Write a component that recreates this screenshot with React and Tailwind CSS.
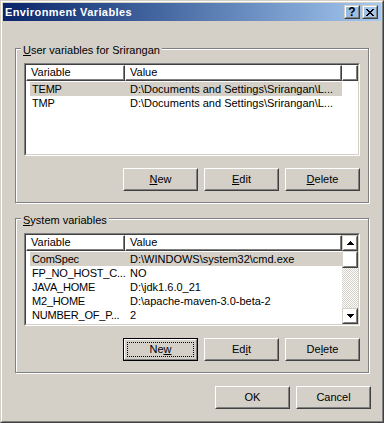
import React from "react";

function Btn({ children, def = false }) {
  if (def)
    return (
      <div className="w-[75px] h-[23px] border border-black">
        <div className="w-full h-full border border-t-white border-l-white border-r-[#808080] border-b-[#808080] p-[2px]">
          <div className="w-full h-full border border-dotted border-black flex items-center justify-center">
            {children}
          </div>
        </div>
      </div>
    );
  return (
    <div className="w-[75px] h-[23px] border border-t-white border-l-white border-r-[#404040] border-b-[#404040]">
      <div className="w-full h-full border border-t-[#d4d0c8] border-l-[#d4d0c8] border-r-[#808080] border-b-[#808080] flex items-center justify-center">
        {children}
      </div>
    </div>
  );
}

function U({ children }) {
  return <span className="underline underline-offset-[1px]">{children}</span>;
}

function HeadCell({ w, children }) {
  return (
    <div className={`${w} h-full border border-t-white border-l-white border-r-[#404040] border-b-[#404040]`}>
      <div className="h-full border-r border-b border-[#808080] pl-[4px] flex items-center whitespace-nowrap">
        {children}
      </div>
    </div>
  );
}

function Raised({ className = "", children }) {
  return (
    <div className={`border border-t-[#d4d0c8] border-l-[#d4d0c8] border-r-[#404040] border-b-[#404040] ${className}`}>
      <div className="w-full h-full border border-t-white border-l-white border-r-[#808080] border-b-[#808080] flex items-center justify-center">
        {children}
      </div>
    </div>
  );
}

function Arrow({ up }) {
  return (
    <svg width="7" height="4" viewBox="0 0 7 4" shapeRendering="crispEdges">
      {up ? (
        <>
          <rect x="3" y="0" width="1" height="1" fill="#000" />
          <rect x="2" y="1" width="3" height="1" fill="#000" />
          <rect x="1" y="2" width="5" height="1" fill="#000" />
          <rect x="0" y="3" width="7" height="1" fill="#000" />
        </>
      ) : (
        <>
          <rect x="0" y="0" width="7" height="1" fill="#000" />
          <rect x="1" y="1" width="5" height="1" fill="#000" />
          <rect x="2" y="2" width="3" height="1" fill="#000" />
          <rect x="3" y="3" width="1" height="1" fill="#000" />
        </>
      )}
    </svg>
  );
}

function List({ rows, scroll }) {
  return (
    <div className="w-[336px] h-[93px] border border-t-[#808080] border-l-[#808080] border-r-white border-b-white">
      <div className="w-full h-full border border-t-[#404040] border-l-[#404040] border-r-[#d4d0c8] border-b-[#d4d0c8] bg-white flex overflow-hidden">
        <div className="flex-1 flex flex-col min-w-0">
          <div className="h-[16px] flex shrink-0">
            <HeadCell w="w-[99px]">Variable</HeadCell>
            <HeadCell w="w-[217px]">Value</HeadCell>
            {!scroll && (
              <div className="flex-1 h-full border border-t-white border-l-white border-r-[#404040] border-b-[#404040]">
                <div className="h-full border-r border-b border-[#808080]" />
              </div>
            )}
          </div>
          <div className="pt-px flex flex-col">
            {rows.map((r, i) => (
              <div
                key={i}
                className={`ml-[4px] w-[312px] h-[14px] shrink-0 flex items-center leading-[14px] whitespace-nowrap ${
                  i === 0 ? "bg-[#d4d0c8]" : ""
                }`}
              >
                <div className="w-[95px] shrink-0 pl-[2px] tracking-[-0.2px]">{r[0]}</div>
                <div className="flex-1 pl-[5px] overflow-hidden">{r[1]}</div>
              </div>
            ))}
          </div>
        </div>
        {scroll && (
          <div className="w-[16px] h-full flex flex-col shrink-0">
            <Raised className="w-[16px] h-[16px] shrink-0">
              <Arrow up />
            </Raised>
            <Raised className="w-[16px] h-[17px] shrink-0" />
            <div className="flex-1 bg-[repeating-conic-gradient(#ffffff_0_25%,#d4d0c8_0_50%)] bg-[length:2px_2px]" />
            <Raised className="w-[16px] h-[16px] shrink-0">
              <Arrow />
            </Raised>
          </div>
        )}
      </div>
    </div>
  );
}

function Group({ label, children }) {
  return (
    <div className="relative w-[354px] h-[155px] border border-[#808080] shadow-[1px_1px_0_#ffffff,inset_1px_1px_0_#ffffff] pt-[14px] pl-[8px]">
      <div className="absolute left-[5px] top-[-5px] px-[2px] bg-[#d4d0c8] leading-[13px] whitespace-nowrap">
        {label}
      </div>
      {children}
    </div>
  );
}

export default function App() {
  const userRows = [
    ["TEMP", "D:\\Documents and Settings\\Srirangan\\L..."],
    ["TMP", "D:\\Documents and Settings\\Srirangan\\L..."],
  ];
  const sysRows = [
    ["ComSpec", "D:\\WINDOWS\\system32\\cmd.exe"],
    ["FP_NO_HOST_C...", "NO"],
    ["JAVA_HOME", "D:\\jdk1.6.0_21"],
    ["M2_HOME", "D:\\apache-maven-3.0-beta-2"],
    ["NUMBER_OF_P...", "2"],
  ];
  return (
    <div className="w-[384px] h-[423px] bg-[#d4d0c8] border border-t-[#d4d0c8] border-l-[#d4d0c8] border-r-[#404040] border-b-[#404040] font-['Liberation_Sans',Arial,sans-serif] text-[11px] text-black leading-none">
      <div className="h-full border border-t-white border-l-white border-r-[#808080] border-b-[#808080] p-px flex flex-col">
        <div className="h-[18px] shrink-0 bg-linear-to-r from-[#0a246a] to-[#a6caf0] flex items-center pl-[2px] pr-[3px]">
          <div className="flex-1 text-white font-bold text-[11px] tracking-[0.4px] leading-[13px] whitespace-nowrap">
            Environment Variables
          </div>
          <div className="flex gap-[2px]">
            <Raised className="w-[16px] h-[14px]">
              <span className="font-bold text-[12px] leading-none">?</span>
            </Raised>
            <Raised className="w-[16px] h-[14px]">
              <svg width="8" height="7" viewBox="0 0 8 7" shapeRendering="crispEdges">
                <rect x="0" y="0" width="2" height="1" fill="#000" />
                <rect x="6" y="0" width="2" height="1" fill="#000" />
                <rect x="1" y="1" width="2" height="1" fill="#000" />
                <rect x="5" y="1" width="2" height="1" fill="#000" />
                <rect x="2" y="2" width="4" height="1" fill="#000" />
                <rect x="3" y="3" width="2" height="1" fill="#000" />
                <rect x="2" y="4" width="4" height="1" fill="#000" />
                <rect x="1" y="5" width="2" height="1" fill="#000" />
                <rect x="5" y="5" width="2" height="1" fill="#000" />
                <rect x="0" y="6" width="2" height="1" fill="#000" />
                <rect x="6" y="6" width="2" height="1" fill="#000" />
              </svg>
            </Raised>
          </div>
        </div>
        <div className="pl-[12px] pt-[27px] flex flex-col">
          <Group
            label={
              <>
                <U>U</U>ser variables for Srirangan
              </>
            }
          >
            <List rows={userRows} />
            <div className="w-[336px] mt-[12px] flex justify-end gap-[6px]">
              <Btn>
                <U>N</U>ew
              </Btn>
              <Btn>
                <U>E</U>dit
              </Btn>
              <Btn>
                <U>D</U>elete
              </Btn>
            </div>
          </Group>
          <div className="mt-[15px]">
            <Group
              label={
                <>
                  <U>S</U>ystem variables
                </>
              }
            >
              <List rows={sysRows} scroll />
              <div className="w-[336px] mt-[12px] flex justify-end gap-[6px]">
                <Btn def>
                  Ne<U>w</U>
                </Btn>
                <Btn>
                  Ed<U>i</U>t
                </Btn>
                <Btn>
                  De<U>l</U>ete
                </Btn>
              </div>
            </Group>
          </div>
          <div className="w-[356px] mt-[13px] flex justify-end gap-[6px]">
            <Btn>OK</Btn>
            <Btn>Cancel</Btn>
          </div>
        </div>
      </div>
    </div>
  );
}
